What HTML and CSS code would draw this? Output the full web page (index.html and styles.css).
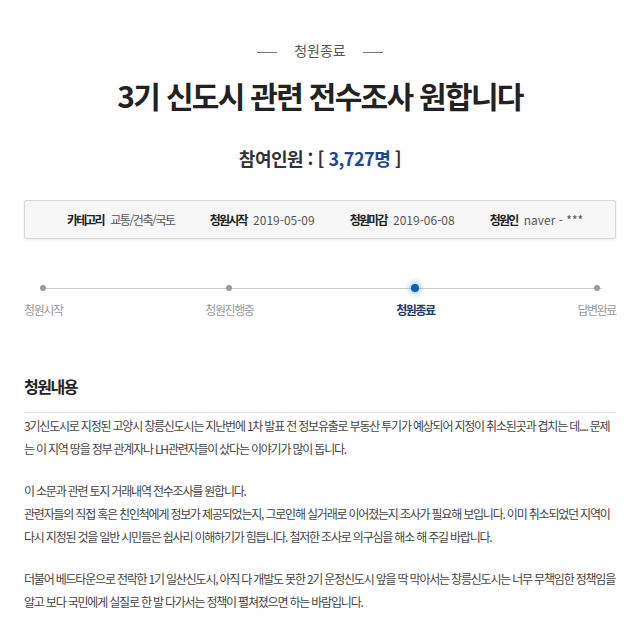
FILE: index.html
```html
<!DOCTYPE html>
<html lang="ko">
<head>
  <meta charset="UTF-8">
  <meta name="viewport" content="width=device-width, initial-scale=1.0">
  <title>3기 신도시 관련 전수조사 원합니다</title>
  <link rel="stylesheet" href="styles.css">
</head>
<body>

  <div class="petition">
    <p class="status">청원종료</p>
    <h1 class="title">3기 신도시 관련 전수조사 원합니다</h1>
    <p class="count">참여인원 : [ <span class="num">3,727명</span> ]</p>

    <ul class="info">
      <li><strong>카테고리</strong> <span class="ko">교통/건축/국토</span></li>
      <li><strong>청원시작</strong> <span>2019-05-09</span></li>
      <li><strong>청원마감</strong> <span>2019-06-08</span></li>
      <li><strong>청원인</strong> <span>naver - ***</span></li>
    </ul>

    <ol class="steps">
      <li class="step"><span class="dot"></span><span class="label">청원시작</span></li>
      <li class="step"><span class="dot"></span><span class="label">청원진행중</span></li>
      <li class="step on"><span class="dot"></span><span class="label">청원종료</span></li>
      <li class="step"><span class="dot"></span><span class="label">답변완료</span></li>
    </ol>

    <div class="content">
      <h3 class="content-title">청원내용</h3>
      <div class="content-text">
        <p>3기신도시로 지정된 고양시 창릉신도시는 지난번에 1차 발표 전 정보유출로 부동산 투기가 예상되어 지정이 취소된곳과 겹치는 데.... 문제는 이 지역 땅을 정부 관계자나 LH관련자들이 샀다는 이야기가 많이 돕니다.</p>
        <p>이 소문과 관련 토지 거래내역 전수조사를 원합니다.<br>
        관련자들의 직접 혹은 친인척에게 정보가 제공되었는지, 그로인해 실거래로 이어졌는지 조사가 필요해 보입니다. 이미 취소되었던 지역이 다시 지정된 것을 일반 시민들은 쉽사리 이해하기가 힘듭니다. 철저한 조사로 의구심을 해소 해 주길 바랍니다.</p>
        <p>더불어 베드타운으로 전락한 1기 일산신도시, 아직 다 개발도 못한 2기 운정신도시 앞을 딱 막아서는 창릉신도시는 너무 무책임한 정책임을 알고 보다 국민에게 실질로 한 발 다가서는 정책이 펼쳐졌으면 하는 바람입니다.</p>
      </div>
    </div>
  </div>

</body>
</html>
```

FILE: styles.css
```css
body {
  font-family: "Noto Sans CJK KR", "Noto Sans", sans-serif;
  background-color: #fff;
  color: #333;
  margin: 0;
  padding: 0;
}

.petition {
  padding: 40px 24px 0;
}

.status {
  margin: 0;
  text-align: center;
  font-size: 14px;
  line-height: 20px;
  color: #555;
}

.status::before,
.status::after {
  content: "";
  display: inline-block;
  width: 20px;
  height: 1px;
  background-color: #777;
  vertical-align: middle;
  margin: 0 17px;
}

.title {
  margin: 15px 0 0;
  text-align: center;
  font-size: 30px;
  line-height: 40px;
  font-weight: bold;
  letter-spacing: -1.7px;
  color: #222;
}

.count {
  margin: 30px 0 0;
  text-align: center;
  font-size: 18px;
  line-height: 26px;
  font-weight: bold;
  letter-spacing: -0.5px;
  color: #333;
}

.count .num {
  color: #1e4597;
}

.info {
  list-style: none;
  margin: 29px 0 0;
  padding: 0 0 0 10px;
  height: 37px;
  display: flex;
  justify-content: center;
  align-items: center;
  gap: 35px;
  background-color: #f7f7f7;
  border: 1px solid #d8d8d8;
  border-radius: 2px;
  box-shadow: 0 1px 2px rgba(0, 0, 0, 0.08);
  font-size: 12px;
  color: #555;
}

.info strong {
  color: #222;
  letter-spacing: -1.8px;
  margin-right: 3px;
}

.info .ko {
  letter-spacing: -1.4px;
}

.steps {
  list-style: none;
  margin: 44px 0 0;
  padding: 0;
  display: flex;
  justify-content: space-between;
  position: relative;
}

/* the grey track behind the dots */
.steps::before {
  content: "";
  position: absolute;
  top: 5px;
  left: 20px;
  right: 14px;
  height: 1px;
  background-color: #ccc;
}

.step {
  display: flex;
  flex-direction: column;
  align-items: center;
  position: relative;
}

.dot {
  width: 6px;
  height: 6px;
  margin: 2px 0;
  border-radius: 50%;
  background-color: #999;
}

.step.on .dot {
  width: 8px;
  height: 8px;
  margin: 1px 0;
  background-color: #0b5cc4;
  box-shadow: 0 0 4px 3px rgba(40, 120, 230, 0.25);
}

.label {
  margin-top: 8px;
  font-size: 12px;
  line-height: 18px;
  letter-spacing: -1.4px;
  color: #999;
}

.step.on .label {
  font-weight: bold;
  color: #1d3a6b;
}

.content {
  margin-top: 55px;
}

.content-title {
  margin: 0;
  padding-bottom: 14px;
  border-bottom: 1px solid #ddd;
  font-size: 16px;
  line-height: 24px;
  letter-spacing: -1.5px;
  color: #222;
}

.content-text {
  padding-top: 1px;
  font-size: 12px;
  line-height: 23px;
  letter-spacing: -1.2px;
  color: #444;
}

.content-text p {
  margin: 0 0 19px;
}
```
